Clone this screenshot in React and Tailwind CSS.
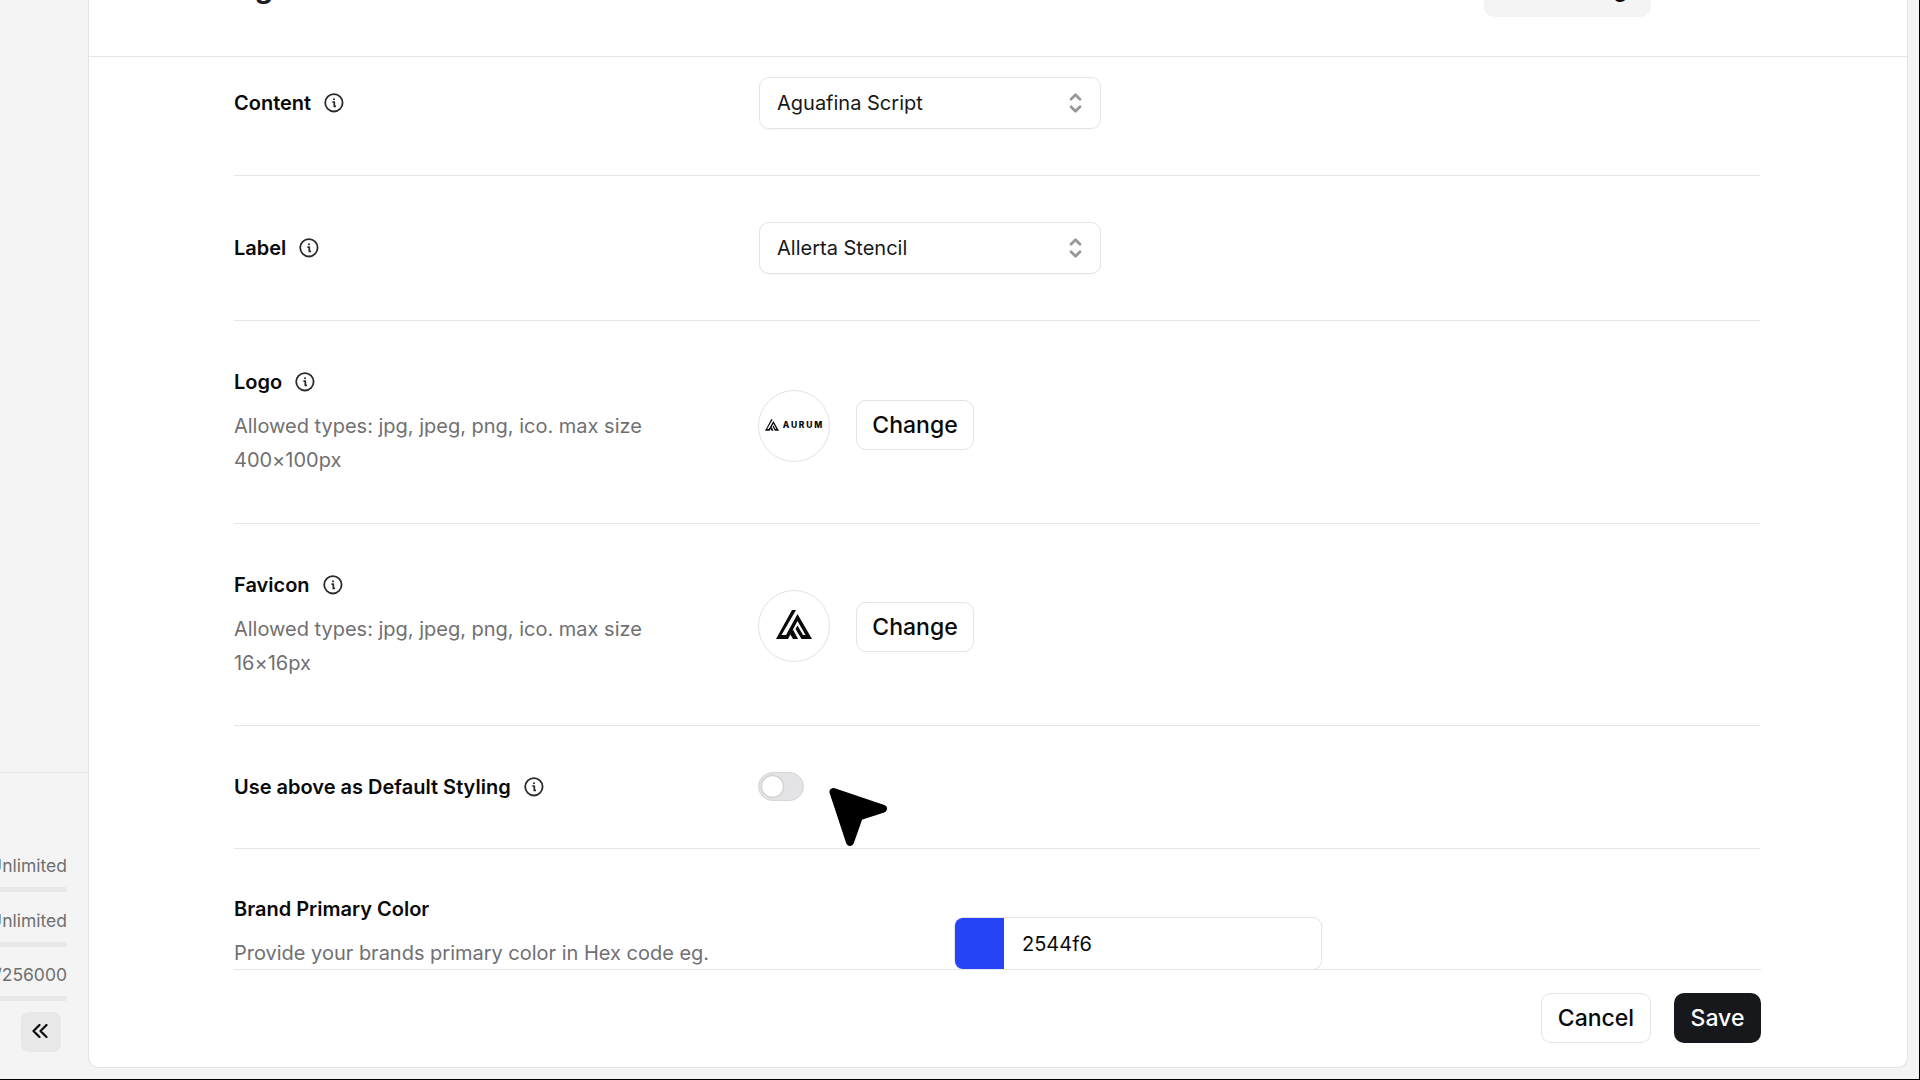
import { useState } from "react";

const ROW = "flex shrink-0 border-b border-[#e6e6e6]";
const OUTLINE_BTN = "flex items-center justify-center rounded-[10px] border border-[#e4e4e4] bg-white text-[23px] font-medium text-[#0a0a0a]";

const USAGE = ["0/Unlimited", "0/Unlimited", "0/256000"];

export default function App() {
  const [enabled, setEnabled] = useState(false);

  return (
    <div className="relative flex h-[1080px] w-[1920px] overflow-hidden border-b border-r border-black bg-[#f4f4f4] font-['Inter',sans-serif] text-[20px] text-[#0a0a0a]">
      <Sidebar />

      <main className="mb-[11px] mr-[11px] flex min-w-0 flex-1 flex-col overflow-hidden rounded-b-[10px] border border-t-0 border-[#e2e2e2] bg-white">
        <header className="flex h-[57px] shrink-0 items-start justify-between border-b border-[#e6e6e6] pl-[56px] pr-[256px]">
          <h1 className="-mt-[32px] text-[29px] font-bold leading-[40px] text-[#1c1c28]">Branding</h1>
          <button type="button" className="-mt-[33px] flex h-[50px] w-[167px] items-center justify-end rounded-[10px] bg-[#f4f4f4] pb-[6px] pr-[10px] text-[23px] font-medium">
            Brand Image
          </button>
        </header>

        <div className="ml-[145px] flex h-[912px] w-[1526px] flex-col overflow-hidden">
          <div className={`${ROW} h-[119px] pt-[20px]`}>
            <div className="w-[525px] pt-[11px]"><Label text="Content" /></div>
            <Select value="Aguafina Script" />
          </div>

          <div className={`${ROW} h-[145px] pt-[46px]`}>
            <div className="w-[525px] pt-[11px]"><Label text="Label" /></div>
            <Select value="Allerta Stencil" />
          </div>

          <div className={`${ROW} h-[203px]`}>
            <div className="w-[524px] pt-[46px]">
              <Label text="Logo" />
              <Hint lines={["Allowed types: jpg, jpeg, png, ico. max size", "400×100px"]} />
            </div>
            <div className="mt-[69px] flex size-[72px] items-center justify-center gap-[4px] rounded-full border border-[#e2e2e2] pb-[2px] pr-px">
              <Mark className="h-[12px] w-[14px] shrink-0" />
              <span className="-mr-[1.8px] text-[8.5px] font-extrabold leading-none tracking-[1.8px]">AURUM</span>
            </div>
            <button type="button" className={`${OUTLINE_BTN} ml-[26px] mt-[79px] h-[50px] w-[118px]`}>Change</button>
          </div>

          <div className={`${ROW} h-[202px]`}>
            <div className="w-[524px] pt-[46px]">
              <Label text="Favicon" />
              <Hint lines={["Allowed types: jpg, jpeg, png, ico. max size", "16×16px"]} />
            </div>
            <div className="mt-[66px] flex size-[72px] items-center justify-center rounded-full border border-[#e2e2e2] pb-[4px]">
              <Mark className="h-[29px] w-[36px]" />
            </div>
            <button type="button" className={`${OUTLINE_BTN} ml-[26px] mt-[78px] h-[50px] w-[118px]`}>Change</button>
          </div>

          <div className={`${ROW} h-[123px]`}>
            <div className="w-[524px] pt-[46px]"><Label text="Use above as Default Styling" /></div>
            <button
              type="button"
              onClick={() => setEnabled(!enabled)}
              className={`mt-[46px] flex h-[29px] w-[46px] items-center rounded-full border border-[#d6d6d8] px-[3px] ${enabled ? "justify-end bg-[#16181b]" : "bg-[#e4e4e6]"}`}
            >
              <span className="size-[21px] rounded-full bg-white shadow-[0_0_2px_rgba(0,0,0,0.35)]" />
            </button>
          </div>

          <div className="flex shrink-0">
            <div className="w-[720px] pt-[45px]">
              <Label text="Brand Primary Color" info={false} />
              <Hint lines={["Provide your brands primary color in Hex code eg."]} />
            </div>
            <div className="mt-[68px] flex h-[53px] w-[368px] overflow-hidden rounded-[9px] border border-[#e4e4e4]">
              <span className="w-[49px] bg-[#2544f6]" />
              <span className="flex items-center pl-[18px]">2544f6</span>
            </div>
          </div>
        </div>

        <footer className="ml-[145px] flex h-[98px] w-[1527px] items-start justify-end gap-[23px] pt-[23px] shadow-[inset_0_1px_0_#e6e6e6]">
          <button type="button" className={`${OUTLINE_BTN} mt-px h-[50px] w-[110px]`}>Cancel</button>
          <button type="button" className="mt-px flex h-[50px] w-[87px] items-center justify-center rounded-[10px] bg-[#16181b] text-[23px] font-medium text-white">Save</button>
        </footer>
      </main>

      {/* pointer */}
      <svg className="absolute left-[829px] top-[787px] h-[60px] w-[60px]" viewBox="0 0 60 60">
        <path d="M4.5 5 54 21.8 30 29.5 21 55Z" stroke="#000" strokeWidth="8" strokeLinejoin="round" />
      </svg>
    </div>
  );
}

function Sidebar() {
  return (
    <aside className="flex w-[88px] shrink-0 flex-col overflow-hidden pt-[772px]">
      <div className="flex h-[307px] flex-col border-t border-[#e6e6e6] pt-[81px]">
        {USAGE.map((value, i) => (
          <div key={i} className="flex h-[54.5px] w-[67px] flex-col items-end">
            <span className="h-[24px] text-[17.5px] leading-[24px] text-[#6f6f6f]">{value}</span>
            <span className="mt-[9px] h-[5px] w-[120px] rounded-full bg-[#e5e7e8]" />
          </div>
        ))}
        <button type="button" className="ml-[21px] -mt-[6px] flex h-[40px] w-[40px] shrink-0 items-center justify-center rounded-[8px] bg-[#e8e8e9] pb-px pr-[2px]">
          <svg className="h-[14px] w-[16px]" viewBox="0 0 16 14" fill="none" stroke="#0a0a0a" strokeWidth="2.2" strokeLinecap="round" strokeLinejoin="round">
            <path d="M7.5 1 1.5 7l6 6M14.5 1l-6 6 6 6" />
          </svg>
        </button>
      </div>
    </aside>
  );
}

function Label({ text, info = true }) {
  return (
    <div className="flex h-[30px] items-center gap-[13px]">
      <span className="font-semibold">{text}</span>
      {info && (
        <svg className="size-[20px]" viewBox="0 0 20 20" fill="none" stroke="#2a2a2e">
          <circle cx="9.9" cy="9.8" r="8.7" strokeWidth="1.8" />
          <path d="M8.4 9.1h1.9v4.3h1.7" strokeWidth="1.7" strokeLinejoin="round" />
          <circle cx="10" cy="6.2" r="1" fill="#2a2a2e" stroke="none" />
        </svg>
      )}
    </div>
  );
}

function Hint({ lines }) {
  return (
    <div className="mt-[12px] leading-[34px] tracking-[-0.01px] text-[#707072]">
      {lines.map((l) => <div key={l} className="whitespace-nowrap">{l}</div>)}
    </div>
  );
}

function Select({ value }) {
  return (
    <button type="button" className="flex h-[52px] w-[342px] items-center justify-between rounded-[10px] border border-[#e4e4e4] pl-[17px] pr-[18px] shadow-[0_1px_2px_rgba(0,0,0,0.04)]">
      <span className="text-[#16181b]">{value}</span>
      <svg className="h-[22px] w-[13px]" viewBox="0 0 13 22" fill="none" stroke="#97979a" strokeWidth="2.7" strokeLinecap="round" strokeLinejoin="round">
        <path d="M2 7.3 6.5 2.8 11 7.3M2 14.7l4.5 4.5 4.5-4.5" />
      </svg>
    </button>
  );
}

function Mark({ className }) {
  return (
    <svg className={className} viewBox="0 0 36 29" fill="#0a0a0a">
      <path d="M16 0h4L5.5 25H10L21.5 4 36 29H25.5l-6-10 2-3.5L27 25h2.5L21.5 11 12 29H0Z" />
      <path d="M17 19.5 22 29h-5l-3-5Z" />
    </svg>
  );
}
